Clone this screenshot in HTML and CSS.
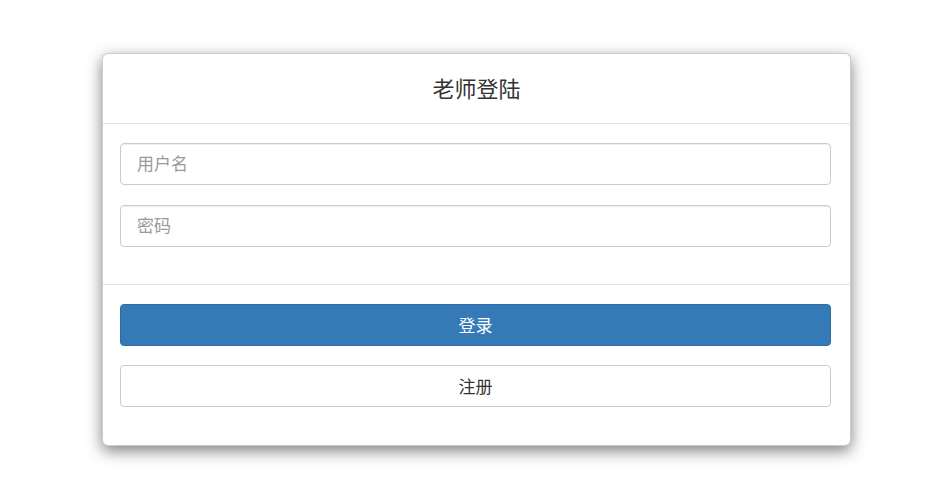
FILE: index.html
```html
<!DOCTYPE html>
<html lang="zh">
<head>
<meta charset="utf-8">
<title>老师登陆</title>
<link rel="stylesheet" href="styles.css">
</head>
<body>
<div class="card">
  <div class="card-header">
    <h3 class="title">老师登陆</h3>
  </div>
  <div class="card-body">
    <input class="field" type="text" placeholder="用户名">
    <input class="field" type="password" placeholder="密码">
  </div>
  <div class="card-footer">
    <button class="btn btn-primary" type="button">登录</button>
    <button class="btn btn-default" type="button">注册</button>
  </div>
</div>
</body>
</html>
```

FILE: styles.css
```css
html, body {
  margin: 0;
  padding: 0;
  background: #fff;
}
body {
  font-family: "Liberation Sans", "Noto Sans CJK SC", sans-serif;
  color: #333;
  padding: 53px 0 50px 102px;
  min-height: 504px;
  box-sizing: border-box;
}
.card {
  width: 749px;
  box-sizing: border-box;
  background: #fff;
  border: 1px solid rgba(0,0,0,0.2);
  border-radius: 6px;
  box-shadow: 0 5px 15px rgba(0,0,0,0.5);
}
.card-header {
  height: 70px;
  box-sizing: border-box;
  padding-bottom: 4px;
  border-bottom: 1px solid #e5e5e5;
  display: flex;
  align-items: center;
  justify-content: center;
}
.title {
  margin: 0;
  font-size: 22px;
  font-weight: normal;
  color: #333;
}
.card-body {
  padding: 19px 19px 37px 17px;
  display: flex;
  flex-direction: column;
  gap: 20px;
}
.field {
  height: 42px;
  box-sizing: border-box;
  border: 1px solid #ccc;
  border-radius: 4px;
  padding: 1px 16px 0;
  font-family: inherit;
  font-size: 17px;
  color: #555;
  box-shadow: inset 0 1px 1px rgba(0,0,0,0.075);
  outline: none;
}
.field::placeholder {
  color: #999;
}
.card-footer {
  border-top: 1px solid #e5e5e5;
  padding: 19px 19px 38px 17px;
  display: flex;
  flex-direction: column;
  gap: 19px;
}
.btn {
  height: 42px;
  box-sizing: border-box;
  border-radius: 4px;
  padding: 0 0 1px;
  font-family: inherit;
  font-size: 17px;
  cursor: pointer;
}
.btn-primary {
  background: #337ab7;
  border: 1px solid #2e6da4;
  color: #fff;
}
.btn-default {
  background: #fff;
  border: 1px solid #ccc;
  color: #333;
}
```
